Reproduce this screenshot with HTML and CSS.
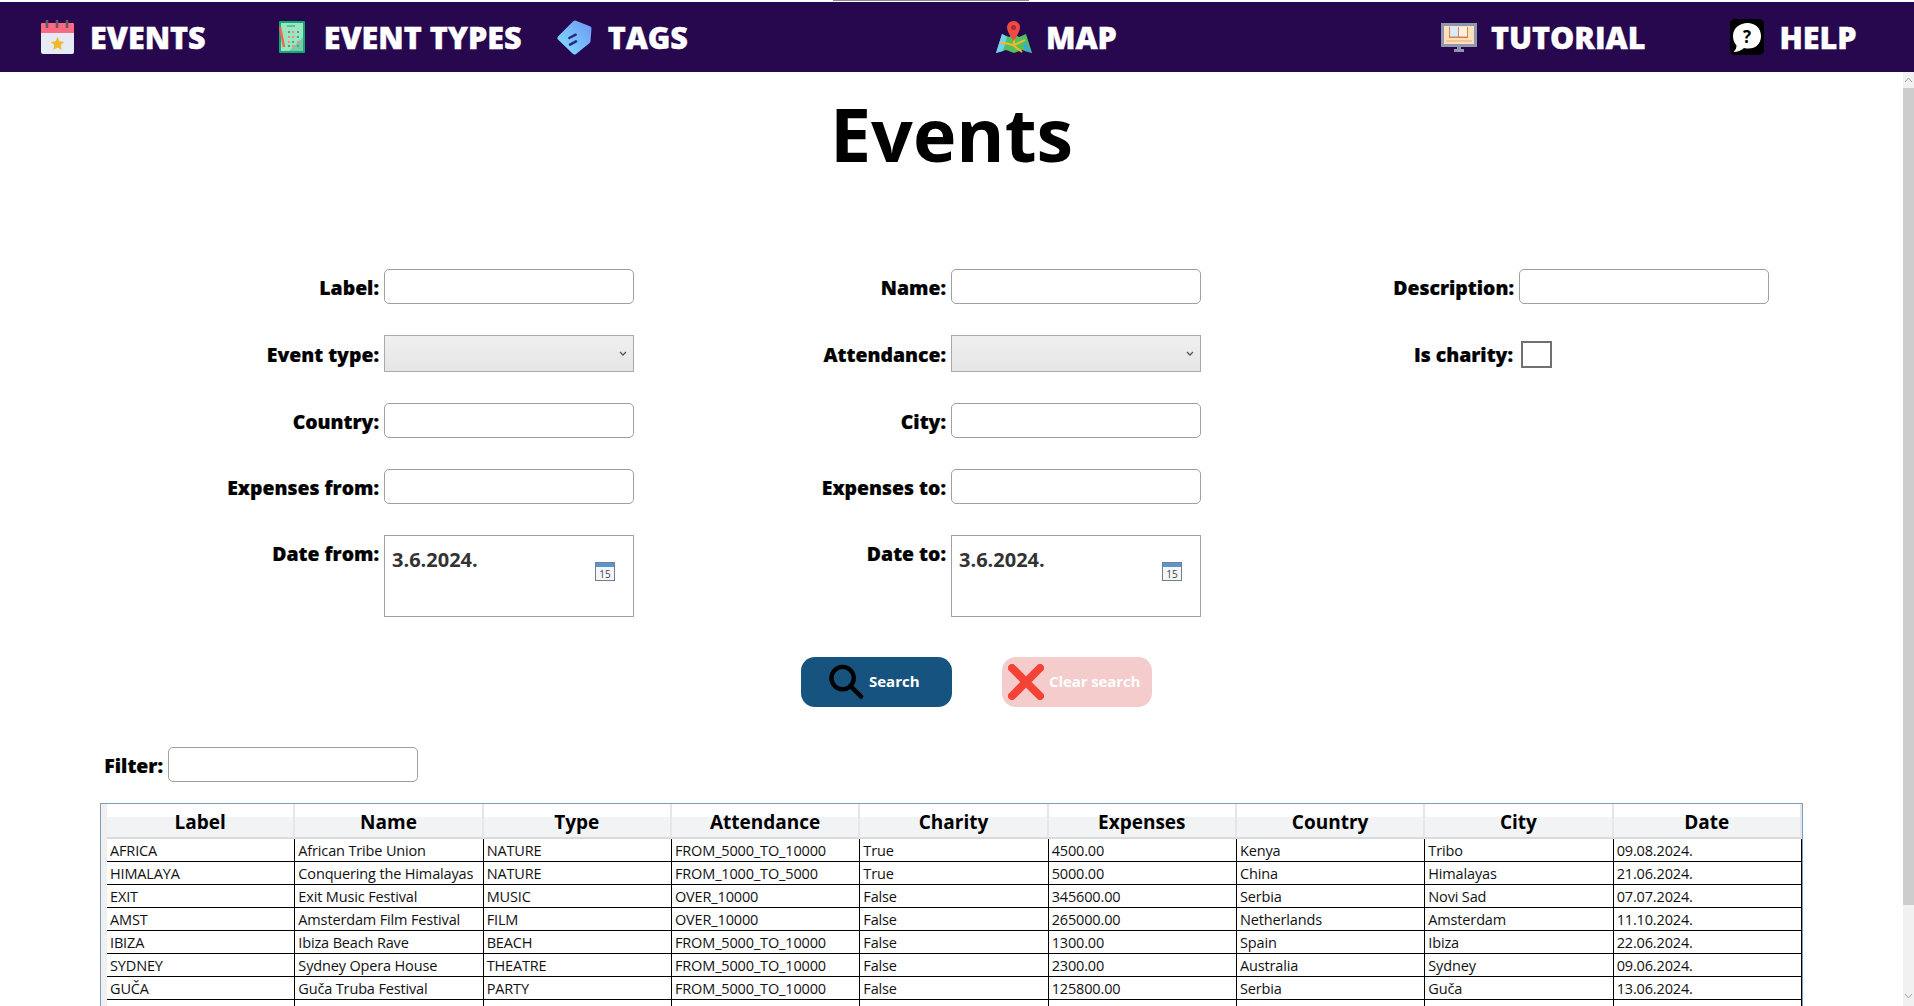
FILE: index.html
```html
<!DOCTYPE html>
<html lang="en">
  <head>
    <meta charset="UTF-8" />
    <title>Events</title>
    <link rel="stylesheet" href="styles.css">
  </head>
  <body>
    <div class="top-line"></div>
    <nav class="navbar">
      <a class="nav-item nav-events">
        <svg class="nav-icon" width="33" height="34" viewBox="0 0 33 34">
          <rect y="3" width="33" height="31" rx="2" fill="#e6eaf4"/>
          <path d="M0 13V5a2 2 0 0 1 2-2h29a2 2 0 0 1 2 2v8z" fill="#fb6a80"/>
          <path d="M6 0v8M16 0v8M26 0v8" stroke="#5f5a66" stroke-width="2.500"/>
          <path d="M16.500 17l2 4.300 4.700.6-3.400 3.200.8 4.600-4.100-2.200-4.100 2.200.8-4.600-3.400-3.200 4.700-.6z" fill="#eeb92a"/>
        </svg>
        EVENTS
      </a>
      <a class="nav-item nav-types">
        <svg class="nav-icon" width="26" height="32" viewBox="0 0 26 32">
          <rect width="26" height="32" rx="1" fill="#0fa877"/>
          <rect x="2" y="2" width="22" height="28" fill="#9be6c0"/>
          <path d="M24 16v14H10z" fill="#7cc9a8"/>
          <path d="M8 5h8" stroke="#5fbf98" stroke-width="2"/>
          <path d="M9 10h2v2H9zM18 10h2v2h-2zM18 15h2v2h-2zM13 20h2v2h-2zM9 24h2v2H9zM18 24h2v2h-2z" fill="#4d9c84"/>
          <path d="M9 15h2v2H9zM13 10h2v2h-2zM13 15h2v2h-2zM9 20h2v2H9zM18 20h2v2h-2zM13 24h2v2h-2z" fill="#f58a70"/>
          <path d="M1 6l4 20" stroke="#f0694f" stroke-width="2.500"/>
        </svg>
        EVENT TYPES
      </a>
      <a class="nav-item nav-tags">
        <svg class="nav-icon" width="35" height="35" viewBox="0 0 35 35">
          <defs>
            <linearGradient id="tagFill" gradientUnits="userSpaceOnUse" x1="3" y1="30" x2="32" y2="4">
              <stop offset="0" stop-color="#7fdcff"/>
              <stop offset="1" stop-color="#6f9cf6"/>
            </linearGradient>
          </defs>
          <path d="M3 18L18 3l14 5.500-1 12.500L17.500 32z" fill="url(#tagFill)" stroke="url(#tagFill)" stroke-width="5" stroke-linejoin="round"/>
          <path d="M12.300 18l6.400-3.300M13 24.700l6-3.400" stroke="#2c2a80" stroke-width="2.500" stroke-linecap="round"/>
        </svg>
        TAGS
      </a>
      <a class="nav-item nav-map">
        <svg class="nav-icon" width="36" height="33" viewBox="0 0 36 33">
          <path d="M6 13L0 32l10-3 8 3 8-3 10 3-6-19-7 3-5-3-5 3z" fill="#4fc25a"/>
          <path d="M6 13L0 32l7-2 4-14z" fill="#6fd0f5"/>
          <path d="M26 16l10 16-7-2z" fill="#3fa8d8"/>
          <path d="M4 21l13 3 9 7M18 16v8l11-5" stroke="#f2b632" stroke-width="2" fill="none"/>
          <path d="M17.500 0c-3.600 0-6.500 2.800-6.500 6.500 0 4.500 6.500 13.500 6.500 13.500S24 11 24 6.500C24 2.800 21.100 0 17.500 0z" fill="#ee4b45"/>
          <circle cx="17.500" cy="6.500" r="2.500" fill="#a92c34"/>
        </svg>
        MAP
      </a>
      <a class="nav-item nav-tutorial">
        <svg class="nav-icon" width="36" height="29" viewBox="0 0 36 29">
          <rect width="36" height="24" fill="#8e97ad"/>
          <rect x="3" y="3" width="30" height="18" fill="#fde0bd"/>
          <path d="M5 18h26" stroke="#f0a66a" stroke-width="1"/>
          <path d="M8 4h19v11H8z" fill="#d4824e"/>
          <path d="M9 4h8v9.500H9z" fill="#d6ecf8"/>
          <path d="M18 4h8v9.500h-8z" fill="#fdf0e0"/>
          <path d="M16 24h4v2h3v3H13v-3h3z" fill="#8e97ad"/>
        </svg>
        TUTORIAL
      </a>
      <a class="nav-item nav-help">
        <svg class="nav-icon" width="34" height="36" viewBox="0 0 34 36">
          <rect width="34" height="36" rx="5" fill="#000"/>
          <path d="M17.500 4C25 4 31 9 31 17s-5.500 12.500-12.500 12.500c-1.500 0-3 0-4.500-.5C12 31 8 33 3.500 33c2-2 3-4 3-6.500C4 23.500 3 20.500 3 17 3 9 10 4 17.500 4z" fill="#fff"/>
          <text x="17" y="24" class="help-mark">?</text>
        </svg>
        HELP
      </a>
    </nav>

    <div class="page">
      <main class="content">
        <h1>Events</h1>

        <form class="search-form">
          <label class="field"><span class="field-label">Label:</span><input type="text" /></label>
          <label class="field"><span class="field-label">Name:</span><input type="text" /></label>
          <label class="field"><span class="field-label">Description:</span><input type="text" /></label>

          <label class="field"><span class="field-label">Event type:</span><span class="select-box"><svg width="8" height="6" viewBox="0 0 8 6"><path d="M1 1l3 3 3-3" fill="none" stroke="#555" stroke-width="1.300"/></svg></span></label>
          <label class="field"><span class="field-label">Attendance:</span><span class="select-box"><svg width="8" height="6" viewBox="0 0 8 6"><path d="M1 1l3 3 3-3" fill="none" stroke="#555" stroke-width="1.300"/></svg></span></label>
          <label class="field"><span class="field-label">Is charity:</span><span class="check-box"></span></label>

          <label class="field"><span class="field-label">Country:</span><input type="text" /></label>
          <label class="field"><span class="field-label">City:</span><input type="text" /></label>
          <div></div>

          <label class="field"><span class="field-label">Expenses from:</span><input type="text" /></label>
          <label class="field"><span class="field-label">Expenses to:</span><input type="text" /></label>
          <div></div>

          <label class="field field-date"><span class="field-label">Date from:</span>
            <span class="date-box">3.6.2024.
              <svg class="cal-icon" width="20" height="19" viewBox="0 0 20 19">
                <rect x=".5" y=".5" width="19" height="18" fill="#f4f6f8" stroke="#6f7f90"/>
                <rect x="1" y="1" width="18" height="4" fill="#5d94cc"/>
                <text x="10" y="15.500" class="cal-day">15</text>
              </svg>
            </span>
          </label>
          <label class="field field-date"><span class="field-label">Date to:</span>
            <span class="date-box">3.6.2024.
              <svg class="cal-icon" width="20" height="19" viewBox="0 0 20 19">
                <rect x=".5" y=".5" width="19" height="18" fill="#f4f6f8" stroke="#6f7f90"/>
                <rect x="1" y="1" width="18" height="4" fill="#5d94cc"/>
                <text x="10" y="15.500" class="cal-day">15</text>
              </svg>
            </span>
          </label>
        </form>

        <div class="button-row">
          <button class="btn btn-search" type="button">
            <svg width="35" height="36" viewBox="0 0 36 36"><circle cx="14" cy="14" r="11.500" fill="none" stroke="#000" stroke-width="4.500"/><path d="M22 22l11 11" stroke="#000" stroke-width="4.500" stroke-linecap="round"/></svg>
            <span class="btn-text">Search</span>
          </button>
          <button class="btn btn-clear" type="button">
            <svg width="36" height="36" viewBox="0 0 36 36"><path d="M4 4l28 28M32 4L4 32" stroke="#f44336" stroke-width="8" stroke-linecap="round"/></svg>
            <span class="btn-text">Clear search</span>
          </button>
        </div>

        <label class="field filter-field"><span class="field-label">Filter:</span><input type="text" /></label>

        <div class="table-frame">
          <table class="events-table">
            <thead>
              <tr><th>Label</th><th>Name</th><th>Type</th><th>Attendance</th><th>Charity</th><th>Expenses</th><th>Country</th><th>City</th><th>Date</th></tr>
            </thead>
            <tbody>
              <tr><td>AFRICA</td><td>African Tribe Union</td><td>NATURE</td><td>FROM_5000_TO_10000</td><td>True</td><td>4500.00</td><td>Kenya</td><td>Tribo</td><td>09.08.2024.</td></tr>
              <tr><td>HIMALAYA</td><td>Conquering the Himalayas</td><td>NATURE</td><td>FROM_1000_TO_5000</td><td>True</td><td>5000.00</td><td>China</td><td>Himalayas</td><td>21.06.2024.</td></tr>
              <tr><td>EXIT</td><td>Exit Music Festival</td><td>MUSIC</td><td>OVER_10000</td><td>False</td><td>345600.00</td><td>Serbia</td><td>Novi Sad</td><td>07.07.2024.</td></tr>
              <tr><td>AMST</td><td>Amsterdam Film Festival</td><td>FILM</td><td>OVER_10000</td><td>False</td><td>265000.00</td><td>Netherlands</td><td>Amsterdam</td><td>11.10.2024.</td></tr>
              <tr><td>IBIZA</td><td>Ibiza Beach Rave</td><td>BEACH</td><td>FROM_5000_TO_10000</td><td>False</td><td>1300.00</td><td>Spain</td><td>Ibiza</td><td>22.06.2024.</td></tr>
              <tr><td>SYDNEY</td><td>Sydney Opera House</td><td>THEATRE</td><td>FROM_5000_TO_10000</td><td>False</td><td>2300.00</td><td>Australia</td><td>Sydney</td><td>09.06.2024.</td></tr>
              <tr><td>GUČA</td><td>Guča Truba Festival</td><td>PARTY</td><td>FROM_5000_TO_10000</td><td>False</td><td>125800.00</td><td>Serbia</td><td>Guča</td><td>13.06.2024.</td></tr>
              <tr><td></td><td></td><td></td><td></td><td></td><td></td><td></td><td></td><td></td></tr>
            </tbody>
          </table>
        </div>
      </main>

      <div class="scroll-track">
        <svg class="scroll-arrow" width="11" height="8" viewBox="0 0 11 8"><path d="M2 6l3.500-4 3.500 4" fill="none" stroke="#a3a3a3"/></svg>
        <div class="scroll-thumb"></div>
        <svg class="scroll-arrow" width="11" height="8" viewBox="0 0 11 8"><path d="M2 2l3.500 4 3.500-4" fill="none" stroke="#a3a3a3"/></svg>
      </div>
    </div>
  </body>
</html>
```

FILE: styles.css
```css
* { box-sizing: border-box; }
html, body {
  margin: 0;
  height: 100%;
  overflow: hidden;
  background: #fff;
  font-family: "Open Sans", "Noto Sans", sans-serif;
  color: #000;
}

.top-line {
  width: 196px;
  height: 1px;
  margin-left: 833px;
  margin-bottom: 1px;
  background: #8a8a8a;
}

/* Top menu */
.navbar {
  display: flex;
  align-items: center;
  height: 70px;
  padding-left: 41px;
  background: #27084f;
}
.nav-item {
  display: flex;
  align-items: center;
  gap: 16px;
  color: #fff;
  font-size: 30.5px;
  font-weight: 800;
  -webkit-text-stroke: 0.4px #fff;
  white-space: nowrap;
}
.nav-icon { flex: none; }
.nav-types { margin-left: 73px; gap: 19px; }
.nav-tags { margin-left: 35px; }
.nav-map { margin-left: 308px; gap: 14px; }
.nav-tutorial { margin-left: 324px; gap: 14px; }
.nav-help { margin-left: 85px; gap: 15px; }
.help-mark { font-size: 17px; font-weight: 700; fill: #000; text-anchor: middle; -webkit-text-stroke: 0; }

/* Page body */
.page {
  display: flex;
  height: 934px;
  overflow: hidden;
}
.content {
  flex: 1;
  min-width: 0;
}
h1 {
  margin: 0;
  height: 197px;
  font-size: 73.5px;
  font-weight: 700;
  line-height: 123px;
  text-align: center;
}

.search-form {
  display: grid;
  grid-template-columns: 567px 568px 318px;
  grid-template-rows: 35px 37px 35px 35px 82px;
  row-gap: 31px;
  margin-left: 316px;
}
.field {
  display: flex;
  align-items: center;
  justify-content: flex-end;
  gap: 5px;
  width: 318px;
  font-size: 19.4px;
  font-weight: 800;
  -webkit-text-stroke: 0.2px #000;
  white-space: nowrap;
}
.field-label { margin-top: 2px; }
.field input {
  width: 250px;
  height: 35px;
  margin: 0;
  border: 1px solid #a0a0a0;
  border-radius: 5px;
  background: #fff;
  flex: none;
}
.select-box {
  display: flex;
  align-items: center;
  justify-content: flex-end;
  flex: none;
  width: 250px;
  height: 37px;
  padding-right: 6px;
  border: 1px solid #a9a9a9;
  background: linear-gradient(#f0f0f0, #e5e5e5);
}
.check-box {
  flex: none;
  width: 31px;
  height: 27px;
  margin: 2px 217px 0 3px;
  border: 2px solid #707070;
}
.field-date { align-items: flex-start; line-height: 33px; }
.date-box {
  position: relative;
  flex: none;
  width: 250px;
  height: 82px;
  padding-left: 7px;
  border: 1px solid #a0a0a0;
  color: #333;
  font-size: 20px;
  font-weight: 700;
  -webkit-text-stroke: 0;
  line-height: 48px;
}
.cal-icon {
  position: absolute;
  top: 26px;
  right: 18px;
}
.cal-day { font-size: 10px; font-weight: 400; fill: #444; text-anchor: middle; }

.button-row {
  display: flex;
  gap: 50px;
  margin: 40px 0 0 801px;
}
.btn {
  display: flex;
  align-items: center;
  width: 151px;
  height: 50px;
  gap: 5px;
  padding: 0 0 0 28px;
  border: 0;
  border-radius: 14px;
  background: #16537e;
  color: #fff;
  font-family: inherit;
  font-size: 15px;
  font-weight: 700;
  white-space: nowrap;
}
.btn-text { margin-bottom: 2px; }
.btn-clear {
  width: 150px;
  padding-left: 6px;
  background: #f4cccc;
  letter-spacing: -0.1px;
}

.filter-field {
  width: 418px;
  margin-top: 40px;
}

/* Results table, cut by the window bottom */
.table-frame {
  width: 1703px;
  margin: 21px 0 0 100px;
  padding-left: 6px;
  border: 1px solid #7f9db9;
  background: #f0f0f0;
}
.events-table {
  width: 100%;
  border-collapse: separate;
  border-spacing: 0;
  table-layout: fixed;
  background: #fff;
  font-size: 14.5px;
  letter-spacing: -0.15px;
}
.events-table th {
  height: 35px;
  padding: 3px 0 0;
  border-right: 2px solid #e4e6ea;
  border-bottom: 2px solid #d8dadf;
  background: linear-gradient(#fff 0, #fff 38%, #f2f3f5 39%, #f2f3f5 100%);
  font-size: 19px;
  font-weight: 700;
  letter-spacing: 0;
}
.events-table td {
  height: 23px;
  padding: 1px 0 0 3px;
  border-right: 1px solid #000;
  border-bottom: 1px solid #000;
  color: #111;
  line-height: 21px;
  overflow: hidden;
  white-space: nowrap;
}

/* Fake scrollbar */
.scroll-track {
  display: flex;
  flex-direction: column;
  align-items: center;
  flex: none;
  width: 11px;
  background: #f1f1f1;
}
.scroll-arrow { flex: none; margin: 4px 0; }
.scroll-thumb {
  flex: none;
  width: 100%;
  height: 817px;
  margin-bottom: 83px;
  background: #cdcdcd;
}
```
